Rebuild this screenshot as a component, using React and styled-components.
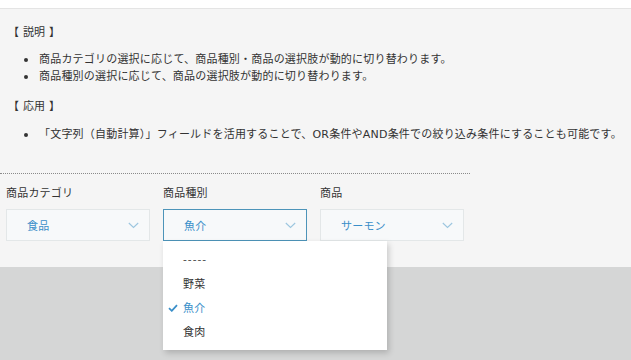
import React from "react";
import styled, { createGlobalStyle } from "styled-components";

const Global = createGlobalStyle`
  html, body { margin: 0; padding: 0; background: #d5d6d6; }
  body { font-family: "Noto Sans CJK JP", "Noto Sans", sans-serif; color: #333; }
  * { box-sizing: border-box; }
`;

const Page = styled.div`
  width: 631px;
  height: 360px;
  background: #d5d6d6;
  position: relative;
  overflow: hidden;
`;

const TopStrip = styled.div`
  height: 9px;
  background: #fff;
  border-bottom: 1px solid #e4e4e4;
`;

const Panel = styled.div`
  background: #f5f5f5;
  padding: 15px 0 26px;
`;

const Notes = styled.div`
  display: flow-root;
  padding-left: 8px;
  font-family: "DejaVu Sans", "Noto Sans CJK JP", sans-serif;
  font-size: 11px;
  line-height: 17px;
  letter-spacing: 0.2px;
`;

const Heading = styled.div`
  margin: 0;
`;

const List = styled.ul`
  margin: 11px 0 13px;
  padding: 0 0 0 31px;
  list-style: none;
  &:first-of-type { margin-top: 10px; }
`;

const Item = styled.li`
  position: relative;
  white-space: nowrap;
  &::before {
    content: "";
    position: absolute;
    left: -15px;
    top: 7px;
    width: 4px;
    height: 4px;
    border-radius: 50%;
    background: #333;
  }
`;

const Divider = styled.div`
  width: 470px;
  margin-top: 17px;
  border-top: 1px dotted #8a8a8a;
`;

const Fields = styled.div`
  display: flex;
  gap: 13px;
  padding: 10px 0 0 6px;
`;

const Field = styled.div`
  position: relative;
  display: flex;
  flex-direction: column;
  gap: 8px;
  width: 144px;
`;

const Label = styled.div`
  font-size: 11px;
  line-height: 17px;
  letter-spacing: 0.2px;
  color: #333;
`;

const Select = styled.div`
  height: 32px;
  display: flex;
  align-items: center;
  justify-content: space-between;
  padding: 0 10px 0 20px;
  background: #f7f9fa;
  border: 1px solid ${(p) => (p.$focused ? "#4d94b9" : "#e3e7e8")};
  color: #3a8fc9;
  font-size: 11px;
  letter-spacing: 0.2px;
`;

const Chevron = () => (
  <svg width="11" height="7" viewBox="0 0 11 7">
    <path d="M0.8 1 L5.5 5.5 L10.2 1" fill="none" stroke="#9cc6df" strokeWidth="1.1" />
  </svg>
);

const Menu = styled.div`
  position: absolute;
  left: 0;
  top: 57px;
  width: 224px;
  padding: 6px 0 7px;
  background: #fff;
  box-shadow: 2px 3px 6px rgba(0, 0, 0, 0.18);
  z-index: 2;
`;

const Option = styled.div`
  position: relative;
  height: 24px;
  display: flex;
  align-items: center;
  padding-left: 20px;
  font-size: 11px;
  letter-spacing: ${(p) => (p.$dash ? "1px" : "0.2px")};
  color: ${(p) => (p.$selected ? "#3a8fc9" : "#333")};
`;

const Check = styled.svg`
  position: absolute;
  left: 5px;
  top: 9px;
`;

const options = ["-----", "野菜", "魚介", "食肉"];

export default function App() {
  return (
    <Page>
      <Global />
      <TopStrip />
      <Panel>
        <Notes>
          <Heading>【 説明 】</Heading>
          <List>
            <Item>商品カテゴリの選択に応じて、商品種別・商品の選択肢が動的に切り替わります。</Item>
            <Item>商品種別の選択に応じて、商品の選択肢が動的に切り替わります。</Item>
          </List>
          <Heading>【 応用 】</Heading>
          <List>
            <Item>「文字列（自動計算）」フィールドを活用することで、OR条件やAND条件での絞り込み条件にすることも可能です。</Item>
          </List>
        </Notes>
        <Divider />
        <Fields>
          <Field>
            <Label>商品カテゴリ</Label>
            <Select>
              <span>食品</span>
              <Chevron />
            </Select>
          </Field>
          <Field>
            <Label>商品種別</Label>
            <Select $focused>
              <span>魚介</span>
              <Chevron />
            </Select>
            <Menu>
              {options.map((o) => (
                <Option key={o} $selected={o === "魚介"} $dash={o === "-----"}>
                  {o === "魚介" && (
                    <Check width="10" height="8" viewBox="0 0 10 8">
                      <path d="M1 4.2 L3.8 6.8 L9 1.2" fill="none" stroke="#3a8fc9" strokeWidth="1.8" />
                    </Check>
                  )}
                  {o}
                </Option>
              ))}
            </Menu>
          </Field>
          <Field>
            <Label>商品</Label>
            <Select>
              <span>サーモン</span>
              <Chevron />
            </Select>
          </Field>
        </Fields>
      </Panel>
    </Page>
  );
}
